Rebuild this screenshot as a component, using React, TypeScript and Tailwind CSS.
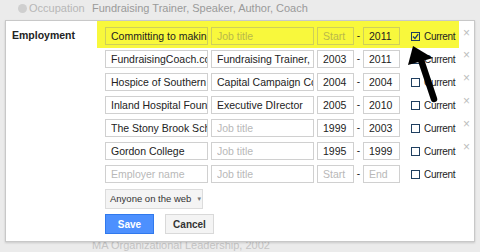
import React from 'react'

type Row = {
	employer?: string
	title?: string
	start?: string
	end?: string
	current?: boolean
	closable?: boolean
}

const rows: Row[] = [
	{ employer: 'FundraisingCoach.com', title: 'Fundraising Trainer, Speaker', start: '2003', end: '2011', closable: true },
	{ employer: 'Hospice of Southern Illinois', title: 'Capital Campaign Consultant', start: '2004', end: '2004', closable: true },
	{ employer: 'Inland Hospital Foundation', title: 'Executive DIrector', start: '2005', end: '2010', closable: true },
	{ employer: 'The Stony Brook School', start: '1999', end: '2003', closable: true },
	{ employer: 'Gordon College', start: '1995', end: '1999', closable: true },
	{},
]

const Field = ({
	value,
	placeholder,
	width,
	hot,
}: {
	value?: string
	placeholder: string
	width: string
	hot?: boolean
}) => (
	<input
		readOnly
		value={value || ''}
		placeholder={placeholder}
		className={`${width} h-[18px] shrink-0 border pl-[5px] pr-0 text-[10.5px] text-[#222] outline-none ${
			hot
				? 'border-[#cfcf5a] bg-transparent placeholder:text-[#b9b94a]'
				: 'border-[#d0d0d0] bg-white placeholder:text-[#b8b8b8]'
		}`}
		style={{ fontFamily: 'inherit' }}
	/>
)

const Check = ({ checked }: { checked?: boolean }) => (
	<div className="flex h-[9px] w-[9px] shrink-0 items-center justify-center border border-[#1f3f60]">
		{checked && (
			<svg width="7" height="7" viewBox="0 0 7 7">
				<path d="M1 3.5 L3 5.5 L6.2 1.2" fill="none" stroke="#1f3f60" strokeWidth="1.3" />
			</svg>
		)}
	</div>
)

const EntryRow = ({ row, hot }: { row: Row; hot?: boolean }) => (
	<div className="flex items-start">
		<div
			className={`flex w-[362px] items-center pl-[8px] ${
				hot ? 'h-[27px] bg-[#f8f83c] pt-[3px]' : 'h-[18px]'
			}`}
		>
			<Field value={row.employer} placeholder="Employer name" width="w-[103px]" hot={hot} />
			<div className="w-[3px]" />
			<Field value={row.title} placeholder="Job title" width="w-[103px]" hot={hot} />
			<div className="w-[3px]" />
			<Field value={row.start} placeholder="Start" width="w-[37px]" hot={hot} />
			<div className="w-[9px] text-center text-[10px] leading-[18px] text-[#222]">-</div>
			<Field value={row.end} placeholder="End" width="w-[37px]" hot={hot} />
			<div className="w-[11px]" />
			<Check checked={row.current} />
			<span className="ml-[4px] text-[10px] tracking-[-0.3px] text-[#222]">Current</span>
		</div>
		{row.closable && (
			<span className={`ml-[4px] text-[12px] leading-[12px] text-[#bdbdbd] ${hot ? 'mt-[6px]' : 'mt-[-1px]'}`}>
				×
			</span>
		)}
	</div>
)

export default function App() {
	return (
		<div
			className="relative h-[252px] w-[480px] overflow-hidden bg-[#ebebeb]"
			style={{ fontFamily: '"Liberation Sans", Arial, sans-serif' }}
		>
			<div className="flex h-[20px] items-center pb-[4px] text-[11px]">
				<span className="ml-[18px] h-[9px] w-[9px] rounded-full bg-[#cfcfcf]" />
				<span className="ml-[2px] w-[63px] text-[#b7b7b7]">Occupation</span>
				<span className="text-[#9a9a9a]">Fundraising Trainer, Speaker, Author, Coach</span>
			</div>

			<div className="relative z-10 mx-[5px] flex h-[222px] w-[470px] border border-[#c8c8c8] bg-white shadow-[0_1px_2px_rgba(0,0,0,0.15)]">
				<div className="w-[91px] shrink-0 pl-[6px] pt-[7px] text-[10.5px] font-bold leading-[14px] text-[#222]">
					Employment
				</div>
				<div className="flex flex-col">
					<EntryRow row={{ employer: 'Committing to making a difference', end: '2011', current: true, closable: true }} hot />
					<div className="mt-[2px] flex flex-col gap-[5px]">
						{rows.map((r, i) => (
							<EntryRow key={i} row={r} />
						))}
					</div>
					<div className="ml-[8px] mt-[6px] flex h-[20px] w-[98px] items-center whitespace-nowrap border border-[#dcdcdc] bg-[#f4f4f4] pl-[4px] text-[9.5px] text-[#333]">
						Anyone on the web
						<span className="ml-[5px] text-[6px] text-[#777]">▼</span>
					</div>
					<div className="ml-[8px] mt-[5px] flex gap-[11px]">
						<button className="h-[20px] w-[49px] border border-[#3079ed] bg-[#4d90fe] text-[10px] font-bold text-white">
							Save
						</button>
						<button className="h-[20px] w-[49px] border border-[#d9d9d9] bg-[#f4f4f4] text-[10px] font-bold text-[#333]">
							Cancel
						</button>
					</div>
				</div>
			</div>

			<div className="-mt-[5px] pl-[92px] text-[11px] text-[#c4c4c4]">MA Organizational Leadership, 2002</div>

			<svg className="pointer-events-none absolute left-0 top-0 z-20" width="480" height="252" viewBox="0 0 480 252">
				<path d="M421 60 L434 99" stroke="#000" strokeWidth="6.5" strokeLinecap="round" />
				<polygon points="413,46 408,65 433,58" fill="#000" />
			</svg>
		</div>
	)
}
